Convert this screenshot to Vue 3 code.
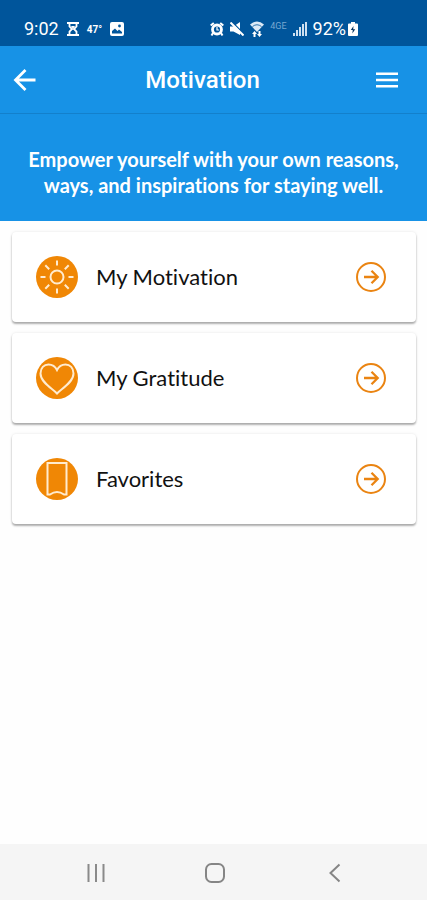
<script setup>
import { ref } from 'vue';

const time = ref('9:02');
const battery = ref(92);

const items = [
    { id: 'motivation', label: 'My Motivation' },
    { id: 'gratitude', label: 'My Gratitude' },
    { id: 'favorites', label: 'Favorites' },
];
</script>

<template>
    <div class="screen">
        <div class="status-bar">
            <div class="status-left">
                <span class="status-text">{{ time }}</span>
                <svg width="12" height="14" viewBox="0 0 12 14" fill="none" stroke="#fff" stroke-width="1.800">
                    <path d="M0 1h12M0 13h12" />
                    <path d="M2.500 1v3.500L5 7 2.500 9.500V13M9.500 1v3.500L7 7l2.500 2.500V13" />
                    <path d="M4 4h4L6 7z" fill="#fff" stroke="none" />
                </svg>
                <span class="status-temp">47°</span>
                <svg width="14" height="14" viewBox="0 0 14 14">
                    <rect width="14" height="14" rx="2" fill="#fff" />
                    <path d="M2 11.500V9l3-2.500 2.500 2.500L9 7.500l3 2.500v1.500z" fill="#00559b" />
                    <circle cx="9.500" cy="4" r="1.400" fill="#00559b" />
                </svg>
            </div>
            <div class="status-right">
                <svg width="14" height="14" viewBox="0 0 14 14" fill="none" stroke="#fff">
                    <circle cx="7" cy="7.500" r="4.500" stroke-width="2.800" />
                    <path d="M.7 3.500L3.800.9M13.300 3.500L10.200.9M3 11l-1.500 2.500M11 11l1.500 2.500" stroke-width="2" />
                    <path d="M7 5v3h2.200" stroke-width="1.200" />
                </svg>
                <svg width="14" height="14" viewBox="0 0 14 14">
                    <path d="M0 4.500h3.500L10 0v13L3.500 9.500H0z" fill="#fff" />
                    <path d="M2 0l13 13" stroke="#00559b" stroke-width="1.500" />
                    <path d="M.5 .5l13 13" stroke="#fff" stroke-width="2" />
                </svg>
                <svg width="14" height="16" viewBox="0 0 14 16">
                    <path d="M0 3.500Q7-2.500 14 3.500L7 11z" fill="#dbe9f6" />
                    <path d="M2.500 5.500q4.500-3.500 9 0" fill="none" stroke="#00559b" stroke-width=".8" />
                    <path d="M4.500 10l2.500 3H5.500v3h-2v-3H2zM9.500 16L7 13h1.500v-3h2v3H12z" fill="#fff" />
                </svg>
                <span class="status-network">4GE</span>
                <svg width="14" height="14" viewBox="0 0 14 14" fill="#cfe0f0">
                    <rect x="0" y="11" width="2" height="3" />
                    <rect x="3" y="8" width="2" height="6" />
                    <rect x="6" y="5" width="2" height="9" />
                    <rect x="9" y="2" width="2" height="12" />
                    <rect x="12" y="0" width="2" height="14" />
                </svg>
                <span class="status-battery">
                    <span class="status-text">{{ battery }}%</span>
                    <svg width="10" height="14" viewBox="0 0 10 14">
                        <path d="M3 0h4v1.500h2a1 1 0 0 1 1 1V13a1 1 0 0 1-1 1H1a1 1 0 0 1-1-1V2.500a1 1 0 0 1 1-1h2z" fill="#fff" />
                        <path d="M5.500 4L2.800 8h2l-.5 3.500L7.200 7.300h-2z" fill="#00315f" />
                    </svg>
                </span>
            </div>
        </div>

        <header class="app-bar">
            <button type="button" class="back" aria-label="Back">
                <svg width="24" height="24" viewBox="0 0 24 24" fill="none" stroke="#fff" stroke-width="2.800">
                    <path d="M23.500 12H4M13.500 2L3.500 12l10 10" />
                </svg>
            </button>
            <h1>Motivation</h1>
            <button type="button" class="menu" aria-label="Menu">
                <svg width="22" height="16" viewBox="0 0 22 16" fill="#fff">
                    <path d="M0 .5h22v2.500H0zM0 6.700h22v2.500H0zM0 13h22v2.500H0z" />
                </svg>
            </button>
        </header>

        <p class="banner">Empower yourself with your own reasons, ways, and inspirations for staying well.</p>

        <main class="list">
            <button v-for="item in items" :key="item.id" type="button" class="card">
                <svg class="card-icon" viewBox="0 0 42 42" fill="none" stroke="#ffebcf" stroke-width="2">
                    <circle cx="21" cy="21" r="21" fill="#f08705" stroke="none" />
                    <g v-if="item.id == 'motivation'">
                        <circle cx="21" cy="21" r="6.500" />
                        <path d="M21 4.500v5M21 32.500v5M4.500 21h5M32.500 21h5M9.300 9.300l3.900 3.900M28.800 28.800l3.900 3.900M9.300 32.700l3.900-3.900M28.800 13.200l3.900-3.900" />
                    </g>
                    <path v-else-if="item.id == 'gratitude'" d="M21 36.500C17 32 4.500 25.500 4.500 16.500C4.500 11 8 7.500 12.500 7.500C17 7.500 19.500 10 21 13C22.500 10 25 7.500 29.500 7.500C34 7.500 37.500 11 37.500 16.500C37.500 25.500 25 32 21 36.500z" />
                    <path v-else d="M11.500 5h19v31.500h-2.500q-7-5-14 0h-2.500z" />
                </svg>
                <span class="card-label">{{ item.label }}</span>
                <svg class="card-arrow" viewBox="0 0 30 30" fill="none" stroke="#ea8412" stroke-width="2">
                    <circle cx="15" cy="15" r="14" />
                    <path d="M8 15h13.500M15.500 8.800l6.200 6.200-6.200 6.200" stroke-width="2.300" />
                </svg>
            </button>
        </main>

        <nav class="nav-bar">
            <button type="button" aria-label="Recent apps">
                <svg width="20" height="20" viewBox="0 0 20 20" stroke="#8a8a8a" stroke-width="2">
                    <path d="M2.500 1v18M10 1v18M17.500 1v18" />
                </svg>
            </button>
            <button type="button" aria-label="Home">
                <svg width="20" height="20" viewBox="0 0 20 20" fill="none" stroke="#858585" stroke-width="2">
                    <rect x="1" y="1" width="18" height="18" rx="5.500" />
                </svg>
            </button>
            <button type="button" aria-label="Go back">
                <svg width="20" height="20" viewBox="0 0 20 20" fill="none" stroke="#858585" stroke-width="2">
                    <path d="M14.500 1.500L5.500 10l9 8.500" />
                </svg>
            </button>
        </nav>
    </div>
</template>

<style>
body {
    margin: 0;
    background: #fefefe;
}
</style>

<style scoped>
.screen {
    display: flex;
    flex-direction: column;
    min-height: 100vh;
    font-family: Lato, "Liberation Sans", sans-serif;
    font-variant-ligatures: none;
    color: #111;
}

svg {
    display: block;
    flex: none;
}

button {
    padding: 0;
    border: 0;
    background: none;
    font: inherit;
    color: inherit;
    cursor: pointer;
}

/* phone status bar */
.status-bar {
    display: flex;
    justify-content: space-between;
    align-items: center;
    height: 34px;
    padding: 12px 69px 0 24px;
    background: #00559b;
    color: #fff;
    font-family: Roboto, sans-serif;
}

.status-left,
.status-right,
.status-battery {
    display: flex;
    align-items: center;
}

.status-left {
    gap: 8px;
}

.status-right {
    gap: 6px;
}

.status-battery {
    gap: 2px;
}

.status-text {
    font-size: 18px;
    line-height: 24px;
}

.status-temp {
    font-size: 10px;
    font-weight: 700;
}

.status-network {
    padding-bottom: 6px;
    font-size: 9px;
    line-height: 10px;
    color: #79a7d0;
}

/* title bar */
.app-bar {
    display: flex;
    align-items: center;
    height: 67px;
    padding: 0 22px 0 12px;
    background: #1792e6;
    border-bottom: 1px solid #1380cc;
    color: #fff;
}

.app-bar h1 {
    flex: 1;
    margin: 0;
    font-family: Roboto, sans-serif;
    font-size: 24px;
    font-weight: 500;
    line-height: 28px;
    text-align: center;
}

.menu {
    display: flex;
    justify-content: center;
    width: 36px;
}

.banner {
    margin: 0;
    padding: 32px 20px 23px;
    background: #1792e6;
    color: #fff;
    font-size: 20px;
    font-weight: 700;
    line-height: 26px;
    text-align: center;
}

/* cards */
.list {
    display: flex;
    flex: 1;
    flex-direction: column;
    gap: 11px;
    padding: 11px 11px 24px 12px;
}

.card {
    display: flex;
    align-items: center;
    gap: 18px;
    min-height: 90px;
    padding: 0 30px 0 24px;
    border-radius: 4px;
    background: #fff;
    box-shadow: 0 2px 2px rgba(0, 0, 0, .3), 0 0 3px rgba(0, 0, 0, .1);
}

.card-icon {
    width: 42px;
    height: 42px;
}

.card-label {
    flex: 1;
    font-size: 22px;
    line-height: 28px;
    text-align: left;
}

.card-arrow {
    width: 30px;
    height: 30px;
}

/* system navigation */
.nav-bar {
    display: grid;
    grid-template-columns: repeat(3, 1fr);
    height: 56px;
    padding: 0 32px 0 36px;
    background: #f5f5f5;
}

.nav-bar button {
    display: flex;
    justify-content: center;
    align-items: center;
    padding-top: 2px;
}
</style>
